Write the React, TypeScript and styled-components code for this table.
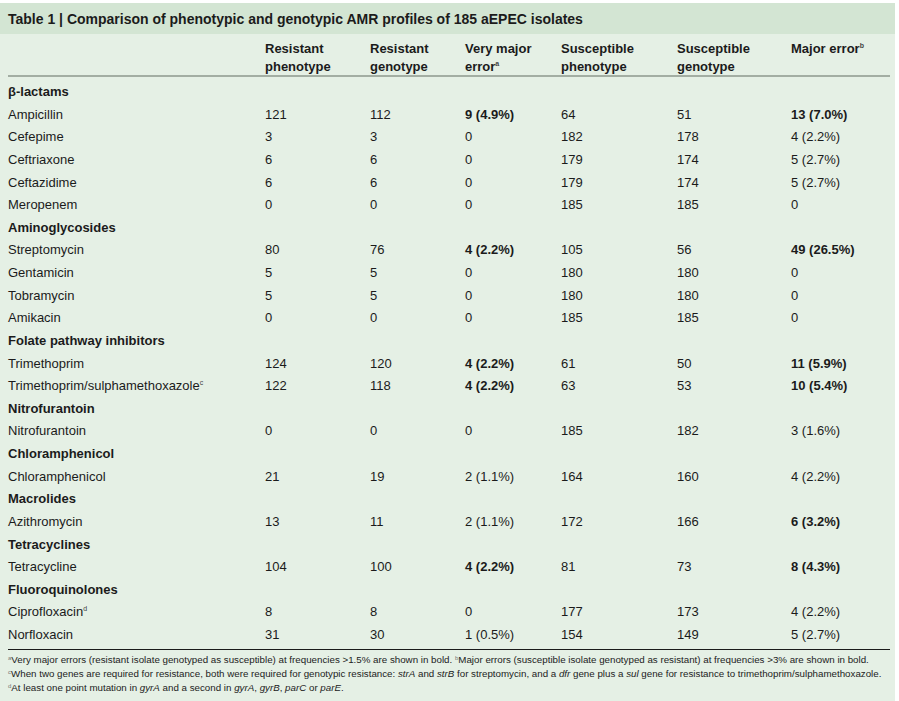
import styled, { createGlobalStyle } from "styled-components";

const GlobalStyle = createGlobalStyle`
  body {
    margin: 0;
    background: #ffffff;
    font-family: "Liberation Sans", Arial, sans-serif;
    color: #1b1b1b;
  }
`;

const Panel = styled.div`
  margin-top: 3px;
  width: 895px;
  height: 698px;
  background: #e5f0e5;
`;
const TitleBar = styled.div`
  height: 31px;
  display: flex;
  align-items: center;
  padding-left: 8px;
  background: #d3e5d3;
  font-size: 14px;
  font-weight: 700;
`;
const Table = styled.table`
  margin-left: 8px;
  width: 882px;
  border-collapse: collapse;
  table-layout: fixed;
  font-size: 13px;
`;
const HeadCell = styled.th`
  text-align: left;
  vertical-align: top;
  font-weight: 700;
  line-height: 17.5px;
  padding: 6px 0 0;
  border-bottom: 2px solid #a3aea3;
`;
const Spacer = styled.tr`
  height: 5px;
`;
const Row = styled.tr`
  height: 22.625px;
`;
const Cell = styled.td<{ $bold?: boolean }>`
  padding: 0;
  line-height: 22.625px;
  white-space: nowrap;
  font-weight: ${(p) => (p.$bold ? 700 : 400)};
`;
const GroupCell = styled.td`
  padding: 0;
  line-height: 22.625px;
  font-weight: 700;
`;
const Sup = styled.sup`
  font-size: 7px;
  line-height: 0;
  vertical-align: 5px;
  color: #444;
`;
const BottomRule = styled.tr`
  td {
    padding: 0;
    height: 2px;
    border-bottom: 1px solid #1b1b1b;
  }
`;
const Notes = styled.div`
  margin: 3px 0 0 8px;
  font-size: 9.75px;
  line-height: 14px;
  color: #222;
  white-space: nowrap;
`;
const NoteLine = styled.div`
  height: 14px;
`;
const NoteMark = styled.sup`
  font-size: 6px;
  line-height: 0;
  vertical-align: 3px;
  color: #777;
`;

type Value = string | { v: string; bold: true };
type Entry = { group: string } | { name: string; mark?: string; values: Value[] };

const b = (v: string): Value => ({ v, bold: true });

const rows: Entry[] = [
  { group: "β-lactams" },
  { name: "Ampicillin", values: ["121", "112", b("9 (4.9%)"), "64", "51", b("13 (7.0%)")] },
  { name: "Cefepime", values: ["3", "3", "0", "182", "178", "4 (2.2%)"] },
  { name: "Ceftriaxone", values: ["6", "6", "0", "179", "174", "5 (2.7%)"] },
  { name: "Ceftazidime", values: ["6", "6", "0", "179", "174", "5 (2.7%)"] },
  { name: "Meropenem", values: ["0", "0", "0", "185", "185", "0"] },
  { group: "Aminoglycosides" },
  { name: "Streptomycin", values: ["80", "76", b("4 (2.2%)"), "105", "56", b("49 (26.5%)")] },
  { name: "Gentamicin", values: ["5", "5", "0", "180", "180", "0"] },
  { name: "Tobramycin", values: ["5", "5", "0", "180", "180", "0"] },
  { name: "Amikacin", values: ["0", "0", "0", "185", "185", "0"] },
  { group: "Folate pathway inhibitors" },
  { name: "Trimethoprim", values: ["124", "120", b("4 (2.2%)"), "61", "50", b("11 (5.9%)")] },
  { name: "Trimethoprim/sulphamethoxazole", mark: "c", values: ["122", "118", b("4 (2.2%)"), "63", "53", b("10 (5.4%)")] },
  { group: "Nitrofurantoin" },
  { name: "Nitrofurantoin", values: ["0", "0", "0", "185", "182", "3 (1.6%)"] },
  { group: "Chloramphenicol" },
  { name: "Chloramphenicol", values: ["21", "19", "2 (1.1%)", "164", "160", "4 (2.2%)"] },
  { group: "Macrolides" },
  { name: "Azithromycin", values: ["13", "11", "2 (1.1%)", "172", "166", b("6 (3.2%)")] },
  { group: "Tetracyclines" },
  { name: "Tetracycline", values: ["104", "100", b("4 (2.2%)"), "81", "73", b("8 (4.3%)")] },
  { group: "Fluoroquinolones" },
  { name: "Ciprofloxacin", mark: "d", values: ["8", "8", "0", "177", "173", "4 (2.2%)"] },
  { name: "Norfloxacin", values: ["31", "30", "1 (0.5%)", "154", "149", "5 (2.7%)"] },
];

const widths = [257, 105, 95, 96, 116, 114, 99];

function App() {
  return (
    <>
      <GlobalStyle />
      <Panel>
        <TitleBar>
          Table 1 | Comparison of phenotypic and genotypic AMR profiles of 185 aEPEC isolates
        </TitleBar>
        <Table>
          <colgroup>
            {widths.map((w, i) => (
              <col key={i} style={{ width: w }} />
            ))}
          </colgroup>
          <thead>
            <tr>
              <HeadCell />
              <HeadCell>Resistant<br />phenotype</HeadCell>
              <HeadCell>Resistant<br />genotype</HeadCell>
              <HeadCell>
                Very major<br />error<Sup>a</Sup>
              </HeadCell>
              <HeadCell>Susceptible<br />phenotype</HeadCell>
              <HeadCell>Susceptible<br />genotype</HeadCell>
              <HeadCell>
                Major error<Sup>b</Sup>
              </HeadCell>
            </tr>
          </thead>
          <tbody>
            <Spacer />
            {rows.map((r, i) =>
              "group" in r ? (
                <Row key={i}>
                  <GroupCell colSpan={7}>{r.group}</GroupCell>
                </Row>
              ) : (
                <Row key={i}>
                  <Cell>
                    {r.name}
                    {r.mark && <Sup>{r.mark}</Sup>}
                  </Cell>
                  {r.values.map((v, j) =>
                    typeof v === "string" ? (
                      <Cell key={j}>{v}</Cell>
                    ) : (
                      <Cell key={j} $bold>
                        {v.v}
                      </Cell>
                    )
                  )}
                </Row>
              )
            )}
            <BottomRule>
              <td colSpan={7} />
            </BottomRule>
          </tbody>
        </Table>
        <Notes>
          <NoteLine>
            <NoteMark>a</NoteMark>Very major errors (resistant isolate genotyped as susceptible) at frequencies &gt;1.5% are shown in bold.{" "}
            <NoteMark>b</NoteMark>Major errors (susceptible isolate genotyped as resistant) at frequencies &gt;3% are shown in bold.
          </NoteLine>
          <NoteLine>
            <NoteMark>c</NoteMark>When two genes are required for resistance, both were required for genotypic resistance: <i>strA</i> and <i>strB</i> for streptomycin, and a <i>dfr</i> gene plus a <i>sul</i> gene for resistance to trimethoprim/sulphamethoxazole.
          </NoteLine>
          <NoteLine>
            <NoteMark>d</NoteMark>At least one point mutation in <i>gyrA</i> and a second in <i>gyrA</i>, <i>gyrB</i>, <i>parC</i> or <i>parE</i>.
          </NoteLine>
        </Notes>
      </Panel>
    </>
  );
}

export default App;
